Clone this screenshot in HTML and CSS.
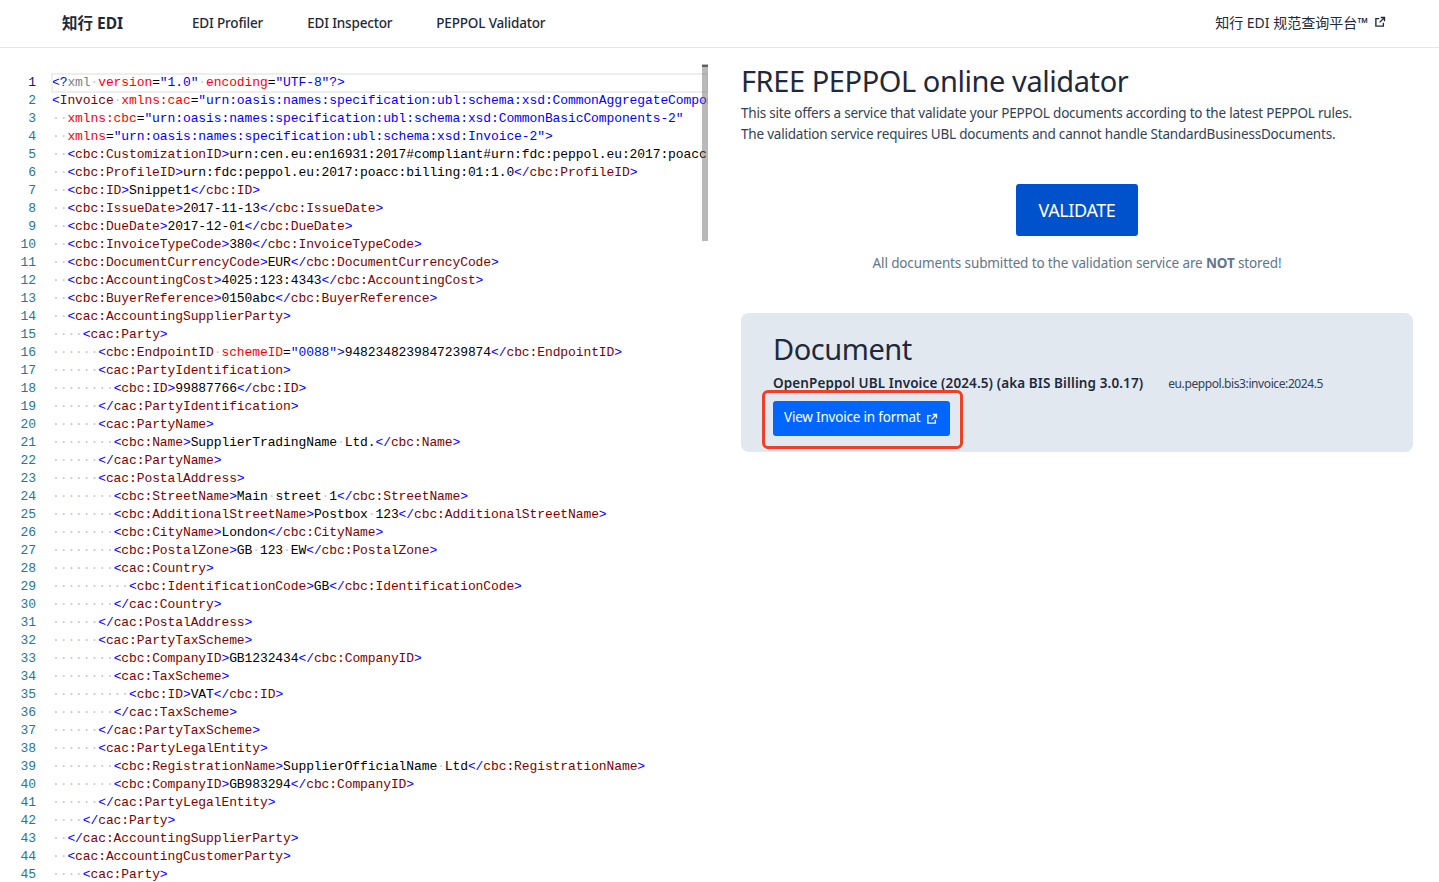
FILE: index.html
```html
<!DOCTYPE html>
<html lang="en">
<head>
<meta charset="utf-8">
<title>FREE PEPPOL online validator</title>
<link rel="stylesheet" href="styles.css">
</head>
<body>
<header class="nav">
  <a class="logo">知行 EDI</a>
  <nav class="links"><a>EDI Profiler</a><a>EDI Inspector</a><a>PEPPOL Validator</a></nav>
  <a class="ext">知行 EDI 规范查询平台™
    <svg class="ext-icon" viewBox="0 0 16 16"><path d="M7 3.500H2.500v10h10V9M9 2h5v5M14 2 7.500 8.500"/></svg>
  </a>
</header>
<main class="main">
  <section class="editor">
    <div class="scroll"></div>
    <div class="ln cur"><span class="num">1</span><span class="src"><b>&lt;?</b><u>xml</u><i>·</i><s>version</s>=<b>"1.0"</b><i>·</i><s>encoding</s>=<b>"UTF-8"</b><b>?&gt;</b></span></div>
    <div class="ln"><span class="num">2</span><span class="src"><b>&lt;</b><em>Invoice</em><i>·</i><s>xmlns:cac</s>=<b>"urn:oasis:names:specification:ubl:schema:xsd:CommonAggregateComponents-2"</b></span></div>
    <div class="ln"><span class="num">3</span><span class="src"><i>··</i><s>xmlns:cbc</s>=<b>"urn:oasis:names:specification:ubl:schema:xsd:CommonBasicComponents-2"</b></span></div>
    <div class="ln"><span class="num">4</span><span class="src"><i>··</i><s>xmlns</s>=<b>"urn:oasis:names:specification:ubl:schema:xsd:Invoice-2"</b><b>&gt;</b></span></div>
    <div class="ln"><span class="num">5</span><span class="src"><i>··</i><b>&lt;</b><em>cbc:CustomizationID</em><b>&gt;</b>urn:cen.eu:en16931:2017#compliant#urn:fdc:peppol.eu:2017:poacc:billing:3.0<b>&lt;/</b><em>cbc:CustomizationID</em><b>&gt;</b></span></div>
    <div class="ln"><span class="num">6</span><span class="src"><i>··</i><b>&lt;</b><em>cbc:ProfileID</em><b>&gt;</b>urn:fdc:peppol.eu:2017:poacc:billing:01:1.0<b>&lt;/</b><em>cbc:ProfileID</em><b>&gt;</b></span></div>
    <div class="ln"><span class="num">7</span><span class="src"><i>··</i><b>&lt;</b><em>cbc:ID</em><b>&gt;</b>Snippet1<b>&lt;/</b><em>cbc:ID</em><b>&gt;</b></span></div>
    <div class="ln"><span class="num">8</span><span class="src"><i>··</i><b>&lt;</b><em>cbc:IssueDate</em><b>&gt;</b>2017-11-13<b>&lt;/</b><em>cbc:IssueDate</em><b>&gt;</b></span></div>
    <div class="ln"><span class="num">9</span><span class="src"><i>··</i><b>&lt;</b><em>cbc:DueDate</em><b>&gt;</b>2017-12-01<b>&lt;/</b><em>cbc:DueDate</em><b>&gt;</b></span></div>
    <div class="ln"><span class="num">10</span><span class="src"><i>··</i><b>&lt;</b><em>cbc:InvoiceTypeCode</em><b>&gt;</b>380<b>&lt;/</b><em>cbc:InvoiceTypeCode</em><b>&gt;</b></span></div>
    <div class="ln"><span class="num">11</span><span class="src"><i>··</i><b>&lt;</b><em>cbc:DocumentCurrencyCode</em><b>&gt;</b>EUR<b>&lt;/</b><em>cbc:DocumentCurrencyCode</em><b>&gt;</b></span></div>
    <div class="ln"><span class="num">12</span><span class="src"><i>··</i><b>&lt;</b><em>cbc:AccountingCost</em><b>&gt;</b>4025:123:4343<b>&lt;/</b><em>cbc:AccountingCost</em><b>&gt;</b></span></div>
    <div class="ln"><span class="num">13</span><span class="src"><i>··</i><b>&lt;</b><em>cbc:BuyerReference</em><b>&gt;</b>0150abc<b>&lt;/</b><em>cbc:BuyerReference</em><b>&gt;</b></span></div>
    <div class="ln"><span class="num">14</span><span class="src"><i>··</i><b>&lt;</b><em>cac:AccountingSupplierParty</em><b>&gt;</b></span></div>
    <div class="ln"><span class="num">15</span><span class="src"><i>····</i><b>&lt;</b><em>cac:Party</em><b>&gt;</b></span></div>
    <div class="ln"><span class="num">16</span><span class="src"><i>······</i><b>&lt;</b><em>cbc:EndpointID</em><i>·</i><s>schemeID</s>=<b>"0088"</b><b>&gt;</b>9482348239847239874<b>&lt;/</b><em>cbc:EndpointID</em><b>&gt;</b></span></div>
    <div class="ln"><span class="num">17</span><span class="src"><i>······</i><b>&lt;</b><em>cac:PartyIdentification</em><b>&gt;</b></span></div>
    <div class="ln"><span class="num">18</span><span class="src"><i>········</i><b>&lt;</b><em>cbc:ID</em><b>&gt;</b>99887766<b>&lt;/</b><em>cbc:ID</em><b>&gt;</b></span></div>
    <div class="ln"><span class="num">19</span><span class="src"><i>······</i><b>&lt;/</b><em>cac:PartyIdentification</em><b>&gt;</b></span></div>
    <div class="ln"><span class="num">20</span><span class="src"><i>······</i><b>&lt;</b><em>cac:PartyName</em><b>&gt;</b></span></div>
    <div class="ln"><span class="num">21</span><span class="src"><i>········</i><b>&lt;</b><em>cbc:Name</em><b>&gt;</b>SupplierTradingName<i>·</i>Ltd.<b>&lt;/</b><em>cbc:Name</em><b>&gt;</b></span></div>
    <div class="ln"><span class="num">22</span><span class="src"><i>······</i><b>&lt;/</b><em>cac:PartyName</em><b>&gt;</b></span></div>
    <div class="ln"><span class="num">23</span><span class="src"><i>······</i><b>&lt;</b><em>cac:PostalAddress</em><b>&gt;</b></span></div>
    <div class="ln"><span class="num">24</span><span class="src"><i>········</i><b>&lt;</b><em>cbc:StreetName</em><b>&gt;</b>Main<i>·</i>street<i>·</i>1<b>&lt;/</b><em>cbc:StreetName</em><b>&gt;</b></span></div>
    <div class="ln"><span class="num">25</span><span class="src"><i>········</i><b>&lt;</b><em>cbc:AdditionalStreetName</em><b>&gt;</b>Postbox<i>·</i>123<b>&lt;/</b><em>cbc:AdditionalStreetName</em><b>&gt;</b></span></div>
    <div class="ln"><span class="num">26</span><span class="src"><i>········</i><b>&lt;</b><em>cbc:CityName</em><b>&gt;</b>London<b>&lt;/</b><em>cbc:CityName</em><b>&gt;</b></span></div>
    <div class="ln"><span class="num">27</span><span class="src"><i>········</i><b>&lt;</b><em>cbc:PostalZone</em><b>&gt;</b>GB<i>·</i>123<i>·</i>EW<b>&lt;/</b><em>cbc:PostalZone</em><b>&gt;</b></span></div>
    <div class="ln"><span class="num">28</span><span class="src"><i>········</i><b>&lt;</b><em>cac:Country</em><b>&gt;</b></span></div>
    <div class="ln"><span class="num">29</span><span class="src"><i>··········</i><b>&lt;</b><em>cbc:IdentificationCode</em><b>&gt;</b>GB<b>&lt;/</b><em>cbc:IdentificationCode</em><b>&gt;</b></span></div>
    <div class="ln"><span class="num">30</span><span class="src"><i>········</i><b>&lt;/</b><em>cac:Country</em><b>&gt;</b></span></div>
    <div class="ln"><span class="num">31</span><span class="src"><i>······</i><b>&lt;/</b><em>cac:PostalAddress</em><b>&gt;</b></span></div>
    <div class="ln"><span class="num">32</span><span class="src"><i>······</i><b>&lt;</b><em>cac:PartyTaxScheme</em><b>&gt;</b></span></div>
    <div class="ln"><span class="num">33</span><span class="src"><i>········</i><b>&lt;</b><em>cbc:CompanyID</em><b>&gt;</b>GB1232434<b>&lt;/</b><em>cbc:CompanyID</em><b>&gt;</b></span></div>
    <div class="ln"><span class="num">34</span><span class="src"><i>········</i><b>&lt;</b><em>cac:TaxScheme</em><b>&gt;</b></span></div>
    <div class="ln"><span class="num">35</span><span class="src"><i>··········</i><b>&lt;</b><em>cbc:ID</em><b>&gt;</b>VAT<b>&lt;/</b><em>cbc:ID</em><b>&gt;</b></span></div>
    <div class="ln"><span class="num">36</span><span class="src"><i>········</i><b>&lt;/</b><em>cac:TaxScheme</em><b>&gt;</b></span></div>
    <div class="ln"><span class="num">37</span><span class="src"><i>······</i><b>&lt;/</b><em>cac:PartyTaxScheme</em><b>&gt;</b></span></div>
    <div class="ln"><span class="num">38</span><span class="src"><i>······</i><b>&lt;</b><em>cac:PartyLegalEntity</em><b>&gt;</b></span></div>
    <div class="ln"><span class="num">39</span><span class="src"><i>········</i><b>&lt;</b><em>cbc:RegistrationName</em><b>&gt;</b>SupplierOfficialName<i>·</i>Ltd<b>&lt;/</b><em>cbc:RegistrationName</em><b>&gt;</b></span></div>
    <div class="ln"><span class="num">40</span><span class="src"><i>········</i><b>&lt;</b><em>cbc:CompanyID</em><b>&gt;</b>GB983294<b>&lt;/</b><em>cbc:CompanyID</em><b>&gt;</b></span></div>
    <div class="ln"><span class="num">41</span><span class="src"><i>······</i><b>&lt;/</b><em>cac:PartyLegalEntity</em><b>&gt;</b></span></div>
    <div class="ln"><span class="num">42</span><span class="src"><i>····</i><b>&lt;/</b><em>cac:Party</em><b>&gt;</b></span></div>
    <div class="ln"><span class="num">43</span><span class="src"><i>··</i><b>&lt;/</b><em>cac:AccountingSupplierParty</em><b>&gt;</b></span></div>
    <div class="ln"><span class="num">44</span><span class="src"><i>··</i><b>&lt;</b><em>cac:AccountingCustomerParty</em><b>&gt;</b></span></div>
    <div class="ln"><span class="num">45</span><span class="src"><i>····</i><b>&lt;</b><em>cac:Party</em><b>&gt;</b></span></div>
  </section>
  <section class="side">
    <h1 class="title">FREE PEPPOL online validator</h1>
    <p class="intro">This site offers a service that validate your PEPPOL documents according to the latest PEPPOL rules.</p>
    <p class="intro">The validation service requires UBL documents and cannot handle StandardBusinessDocuments.</p>
    <div class="action">
      <button class="validate">VALIDATE</button>
      <p class="note">All documents submitted to the validation service are <strong>NOT</strong> stored!</p>
    </div>
    <div class="card">
      <h2 class="card-title">Document</h2>
      <div class="doc"><strong class="doc-name">OpenPeppol UBL Invoice (2024.5) (aka BIS Billing 3.0.17)</strong><span class="doc-id">eu.peppol.bis3:invoice:2024.5</span></div>
      <div class="view-wrap">
        <span class="mark"></span>
        <button class="view">View Invoice in format
          <svg class="ext-icon" viewBox="0 0 16 16"><path d="M7 3.500H2.500v10h10V9M9 2h5v5M14 2 7.500 8.500"/></svg>
        </button>
      </div>
    </div>
  </section>
</main>
</body>
</html>
```
FILE: styles.css
```css
* { box-sizing: border-box; }
html, body { margin: 0; height: 100%; overflow: hidden; background: #fff; }
body { font-family: "Noto Sans", "Noto Sans CJK SC", sans-serif; color: #1e293b; }

.nav { height: 48px; border-bottom: 1px solid #e5e7eb; display: flex; align-items: center; padding: 0 53px 2px 62px; }
.logo { font-size: 15.500px; font-weight: 700; width: 130px; color: #1e293b; }
.links { display: flex; gap: 44px; font-size: 13.500px; font-weight: 500; letter-spacing: -0.17px; }
.ext { margin-left: auto; padding-bottom: 2px; font-size: 14px; display: flex; align-items: center; gap: 6px; }
.ext-icon { width: 12px; height: 12px; fill: none; stroke: currentColor; stroke-width: 1.800; flex: none; }

.main { display: grid; grid-template-columns: 708px 672px; column-gap: 33px; }

.editor { position: relative; height: 834px; overflow: hidden; padding-top: 26px; font-family: "Liberation Mono", monospace; font-size: 13px; letter-spacing: -0.1px; }
.scroll { position: absolute; top: 16px; right: 0; width: 6px; height: 177px; background: linear-gradient(rgba(100,100,100,.45) 1px, #5f5f5f 1px, #5f5f5f 3px, rgba(100,100,100,.45) 3px); z-index: 1; }
.ln { display: flex; height: 18px; line-height: 18px; white-space: pre; color: #000; }
.num { width: 36px; flex: none; text-align: right; color: #237893; }
.cur .num { color: #0b216f; }
.src { margin-left: 16px; flex: 1; min-width: 0; overflow: hidden; }
.cur .src { outline: 2px solid #eeeeee; outline-offset: -1px; }
.src b { font-weight: 400; color: #0000ff; }
.src em { font-style: normal; color: #800000; }
.src s { text-decoration: none; color: #ff0000; }
.src u { text-decoration: none; color: #808080; }
.src i { font-style: normal; color: #c8c8c8; }

.side { padding-top: 14px; }
.title { margin: 0 0 3px; font-size: 29px; line-height: 38px; font-weight: 400; color: #1e293b; letter-spacing: -0.43px; }
.intro { margin: 0; font-size: 13.500px; line-height: 21px; color: #334155; letter-spacing: -0.2px; }
.action { margin-top: 39px; display: flex; flex-direction: column; align-items: center; }
.validate { width: 122px; height: 52px; border: 0; border-radius: 3px; background: #0052cc; color: #fff; font: 400 18px "Noto Sans", sans-serif; letter-spacing: -0.4px; }
.note { margin: 17px 0 0; font-size: 13.500px; line-height: 20px; color: #64748b; letter-spacing: -0.13px; }
.card { margin-top: 40px; height: 139px; background: #e2e8f0; border-radius: 8px; padding: 16px 32px 0; }
.card-title { margin: 0; font-size: 29px; line-height: 40px; font-weight: 400; color: #1e293b; letter-spacing: -0.45px; }
.doc { display: flex; align-items: baseline; gap: 25px; height: 24px; line-height: 24px; margin-top: 2px; }
.doc-name { font-size: 13.500px; font-weight: 600; letter-spacing: 0.11px; }
.doc-id { font-size: 12px; letter-spacing: -0.4px; color: #334155; }
.view-wrap { position: relative; width: 177px; margin-top: 6px; }
.view { width: 177px; height: 35px; border: 0; border-radius: 3px; background: #0066ff; color: #fff; display: flex; align-items: center; gap: 6px; padding: 0 11px 4px; font: 400 13.500px "Noto Sans", sans-serif; letter-spacing: -0.2px; }
.view .ext-icon { margin-top: 4px; }
.mark { position: absolute; left: -11px; top: -11px; width: 201px; height: 59px; border: 3px solid #ee4023; border-radius: 6px; }
```
